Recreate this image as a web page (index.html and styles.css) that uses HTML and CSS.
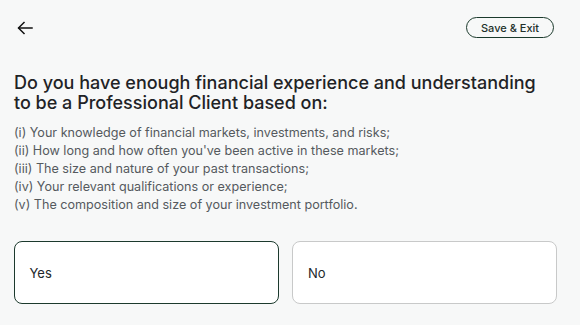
FILE: index.html
```html
<!DOCTYPE html>
<html>
<head>
<meta charset="utf-8">
<link rel="stylesheet" href="styles.css">
</head>
<body>
<div class="page">
  <header class="top">
    <button class="back" aria-label="Back">
      <svg width="16" height="14" viewBox="0 0 16 14" fill="none" stroke="#111" stroke-width="1.5" stroke-linecap="square">
        <path d="M15 7H2"/>
        <path d="M7 1.5L1.5 7L7 12.5"/>
      </svg>
    </button>
    <button class="save">Save &amp; Exit</button>
  </header>
  <h1 class="title">Do you have enough financial experience and understanding to be a Professional Client based on:</h1>
  <ul class="list">
    <li>(i) Your knowledge of financial markets, investments, and risks;</li>
    <li>(ii) How long and how often you've been active in these markets;</li>
    <li>(iii) The size and nature of your past transactions;</li>
    <li>(iv) Your relevant qualifications or experience;</li>
    <li>(v) The composition and size of your investment portfolio.</li>
  </ul>
  <div class="options">
    <div class="option selected">Yes</div>
    <div class="option">No</div>
  </div>
</div>
</body>
</html>
```
FILE: styles.css
```css
html, body {
  margin: 0;
  padding: 0;
  background: #f7f8f8;
}
body {
  font-family: Inter, "Noto Sans", sans-serif;
  color: #1f2326;
}
.page {
  padding: 17px 24px 0 14px;
}
.top {
  display: flex;
  justify-content: space-between;
  align-items: center;
  height: 21px;
}
.back {
  background: none;
  border: 0;
  padding: 0 0 0 3px;
  display: flex;
  align-items: center;
  cursor: pointer;
}
.save {
  font-family: Inter, sans-serif;
  font-size: 11px;
  font-weight: 500;
  color: #22302a;
  background: transparent;
  border: 1.3px solid #1b3a2c;
  border-radius: 12px;
  height: 21px;
  width: 88px;
  padding: 0;
  margin-right: 2px;
}
.title {
  margin: 35px 0 0 0;
  font-size: 18px;
  line-height: 20px;
  font-weight: 500;
  color: #1f2326;
  letter-spacing: 0;
}
.list {
  list-style: none;
  margin: 11px 0 0 0;
  padding: 0;
  font-size: 12.6px;
  line-height: 18px;
  color: #555a5e;
}
.options {
  display: grid;
  grid-template-columns: 1fr 1fr;
  gap: 13px;
  margin-top: 27px;
  margin-right: -1px;
}
.option {
  background: #fff;
  border: 1px solid #c8c9c9;
  border-radius: 8px;
  height: 61px;
  display: flex;
  align-items: center;
  padding-left: 15px;
  font-size: 13px;
  color: #22272a;
}
.option.selected {
  border: 1.5px solid #1c3a2d;
  padding-left: 14.5px;
}
```
